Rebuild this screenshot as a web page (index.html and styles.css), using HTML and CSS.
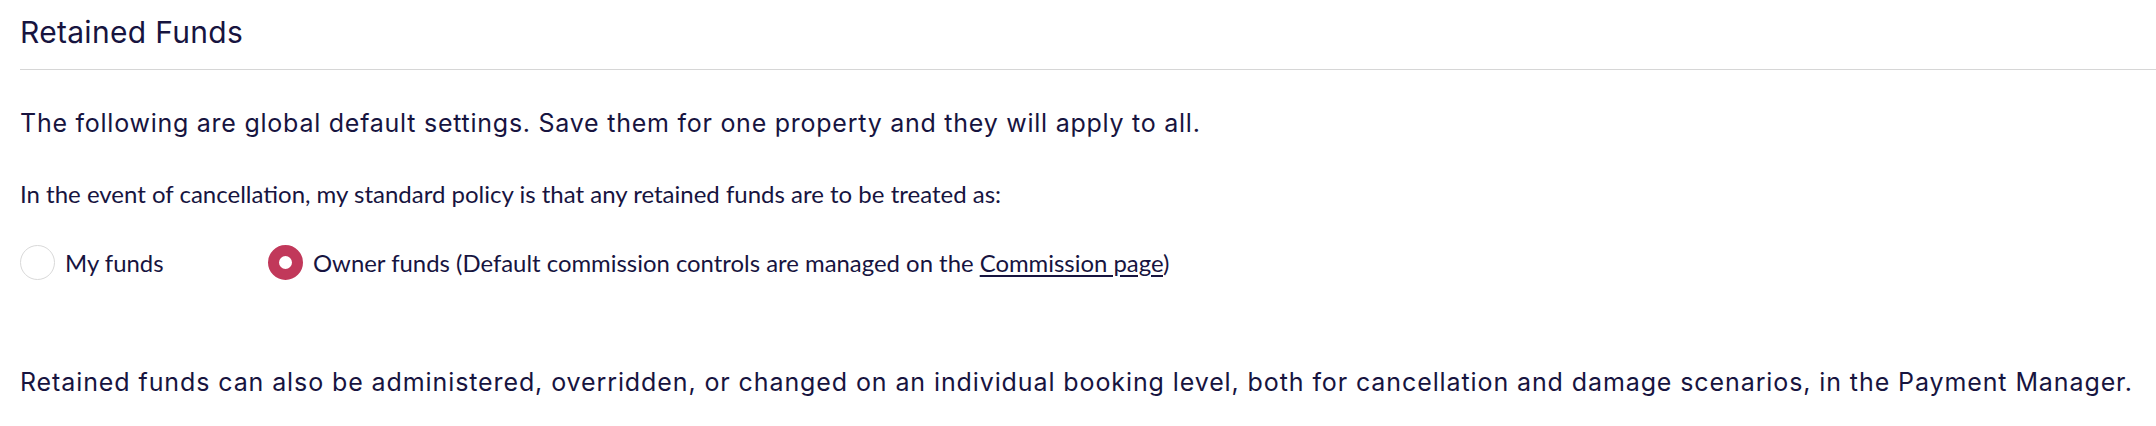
FILE: index.html
```html
<!DOCTYPE html>
<html lang="en">
<head>
<meta charset="utf-8">
<title>Retained Funds</title>
<link rel="stylesheet" href="styles.css">
</head>
<body>
<section class="panel">
  <header class="panel-header">
    <h2 class="panel-title">Retained Funds</h2>
  </header>
  <p class="lead">The following are global default settings. Save them for one property and they will apply to all.</p>
  <p class="question">In the event of cancellation, my standard policy is that any retained funds are to be treated as:</p>
  <div class="options">
    <label class="option option-first">
      <span class="radio"></span>
      <span class="option-text">My funds</span>
    </label>
    <label class="option">
      <span class="radio radio-checked"></span>
      <span class="option-text">Owner funds (Default commission controls are managed on the <a class="link" href="#">Commission page</a>)</span>
    </label>
  </div>
  <p class="note">Retained funds can also be administered, overridden, or changed on an individual booking level, both for cancellation and damage scenarios, in the Payment Manager.</p>
</section>
</body>
</html>
```

FILE: styles.css
```css
html, body {
  margin: 0;
  padding: 0;
  background: #ffffff;
}

.panel {
  padding-left: 20px;
  color: #17143f;
}

.panel-header {
  border-bottom: 1px solid #d6d6d6;
  padding-top: 15px;
  padding-bottom: 20px;
}

.panel-title {
  margin: 0;
  font-family: Inter, "Noto Sans", sans-serif;
  font-weight: 400;
  font-size: 30px;
  letter-spacing: 0.3px;
  line-height: 34px;
  color: #17143f;
}

.lead {
  margin: 38px 0 0 0;
  font-family: Inter, "Noto Sans", sans-serif;
  font-size: 25px;
  letter-spacing: 0.75px;
  line-height: 30px;
}

.question {
  margin: 41px 0 0 0;
  font-family: Lato, "Noto Sans", sans-serif;
  font-size: 24px;
  line-height: 30px;
}

.options {
  display: flex;
  align-items: center;
  margin-top: 36px;
}

.option {
  display: flex;
  align-items: center;
  gap: 10px;
  font-family: Lato, "Noto Sans", sans-serif;
  font-size: 23.9px;
  line-height: 30px;
}

.option-first {
  width: 248px;
}

.radio {
  box-sizing: border-box;
  width: 35px;
  height: 35px;
  border-radius: 50%;
  border: 1px solid #d9d9d9;
  background: #ffffff;
  flex: none;
}

.radio-checked {
  border: 11px solid #c1385a;
}

.link {
  color: #17143f;
  text-decoration: underline;
  text-underline-offset: 3px;
}

.note {
  margin: 87px 0 0 0;
  font-family: Inter, "Noto Sans", sans-serif;
  font-size: 25px;
  letter-spacing: 0.9px;
  line-height: 30px;
}
```
